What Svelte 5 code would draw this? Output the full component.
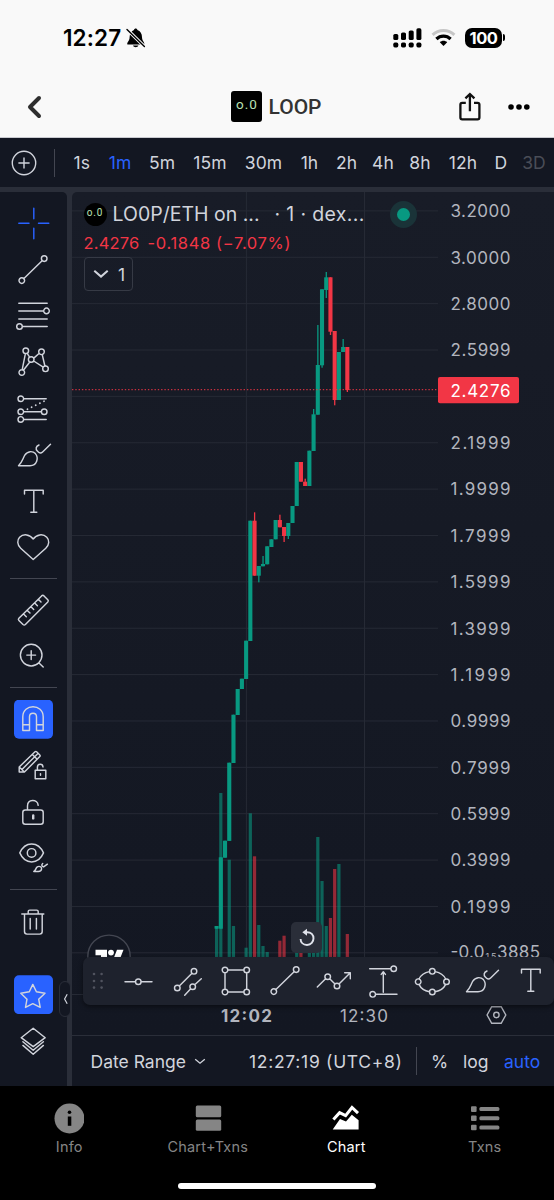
<script>
  const ring = (x, y, r = 2.8) => `M${x - r} ${y}a${r} ${r} 0 1 0 ${2 * r} 0a${r} ${r} 0 1 0 ${-2 * r} 0`;

  const trend = ring(11.8, 33.6) + ring(34.2, 11.6) + 'M13.9 31.5L32.1 13.7';
  const brush =
    'M8.5 33.7C12.5 30 12.8 26.5 14.8 23.2C17.5 18.7 22.8 18.8 25.4 21.6C29 26 27 33.7 20 33.7Z' +
    'M29 13C25.8 14.3 25.4 17 27.3 19.1C29.3 21.4 31 21.5 32.6 20L40.5 12.3';
  const text = 'M14.5 15V11.3H33.2V15M23.8 11.3V33.3M20.8 33.3H26.8';

  const sidebar = [
    { name: 'Cross', active: true, d: 'M8.8 23.3H19M28.5 23.3H38.8M23.8 8.3V18.7M23.8 28.3V38.7' },
    { name: 'Trend line', d: trend },
    {
      name: 'Fib retracement',
      d: 'M8.8 10.2H37.2M8.8 17.9H33.7M8.8 25.9H37.2M12.3 33.5H37.2' + ring(36.5, 17.9) + ring(9.5, 33.5),
    },
    {
      name: 'Pattern',
      d:
        ring(15.8, 11.8) + ring(31.5, 12.8) + ring(21.2, 20.5) + ring(11.8, 33.5) + ring(35.5, 29.8) +
        'M15.4 14.6L12.2 30.7M17.2 14.3L19.6 18.1M19.8 23L13.4 31.2M23.8 19.1L29 14.5M23.7 22L33.2 28.2M32.2 15.5L34.9 27',
    },
    {
      name: 'Forecast',
      d:
        ring(10.8, 12.7) + ring(10.8, 25.7) + ring(34.2, 25.7) + ring(10.8, 33.4) +
        'M13.6 12.7H36.2M13.6 25.7H31.4M13.6 33.4H36.2',
      dots: 'M17.4 23.2L34 15.2',
    },
    { name: 'Brush', d: brush },
    { name: 'Text', d: text },
    {
      name: 'Emoji',
      d: 'M23.2 34.5L10.7 23.2C7 19.8 7 15 9.6 12.2C13.5 8.4 20 9.3 23.2 14C26.4 9.3 33 8.4 36.8 12.2C39.5 15 39.5 19.8 35.8 23.2Z',
    },
    { divider: true },
    {
      name: 'Measure',
      d: 'M31.6 8.9Q32.8 7.8 34 8.9L37.8 12.7Q38.8 13.8 37.8 14.9L15.4 37.5Q14.2 38.6 13 37.5L8.9 33.5Q7.8 32.4 8.9 31.3ZM28.3 12.3L31 15M24.7 16L27.4 18.7M21 19.7L23.7 22.4M17.3 23.4L20 26.1M13.6 27.1L16.3 29.8',
    },
    { name: 'Zoom', d: ring(21.2, 21.1, 10.8) + 'M16.8 21.1H25.6M21.2 16.7V25.5M29 29L33.2 33.1' },
    { divider: true },
    {
      name: 'Magnet',
      boxed: true,
      d: 'M12.8 34.4V20.8C12.8 7.4 33.2 7.4 33.2 20.8V34.4H26.5V20.8C26.5 16 19.5 16 19.5 20.8V34.4ZM12.8 28.7H19.5M26.5 28.7H33.2',
    },
    {
      name: 'Stay in drawing mode',
      d: 'M9.2 29V24L25 8.8Q25.8 8 26.6 8.8L29.8 12Q30.6 12.8 29.8 13.6L14.4 29ZM9.2 24L14.4 29M12 26.4L27.2 11.2M22.3 11.5L27.2 16.2M25.2 27.3H35.8V35.8H25.2ZM27.4 27.3V24.3C27.4 20.3 32.8 20.3 33 24M30.5 30.7V32.2',
    },
    {
      name: 'Lock',
      d: 'M15.3 20.9H30.7Q33.2 20.9 33.2 23.4V32.8Q33.2 35.3 30.7 35.3H15.3Q12.8 35.3 12.8 32.8V23.4Q12.8 20.9 15.3 20.9ZM17.5 20.9V17C17.5 9.8 27.5 9.8 28.2 16.3',
      bold: 'M23.2 26.4V29.4',
    },
    {
      name: 'Hide',
      d:
        'M9.8 17.9C15 5.9 28.3 5.9 33.5 17.9C28.3 29.9 15 29.9 9.8 17.9Z' + ring(21.6, 17.9, 4.3) +
        'M23.8 36.5C26 35.5 25.4 33.2 27.3 31.9C29.2 30.7 31.7 31.8 31.6 33.8C31.5 35.7 30 36.5 28.3 36.5ZM32.7 28.5C31.3 29.7 31.6 31.5 33.6 31.9L37.4 29.2',
    },
    { divider: true },
    {
      name: 'Remove',
      d: 'M11.8 16H33.8M18.2 16V13.6Q18.2 12.1 19.7 12.1H26.7Q28.2 12.1 28.2 13.6V16M14.5 16V33.6Q14.5 36.1 17 36.1H29.7Q32.2 36.1 32.2 33.6V16M20.2 20.5V31M26.4 20.5V31',
    },
    { spacer: true },
    {
      name: 'Favorites',
      boxed: true,
      d: 'M22.8 12.4L26.4 19.7L35 21.2L28.7 27.2L30.2 35.4L22.8 31.7L15.5 35.4L17 27.2L10.8 21.2L19.3 19.7Z',
    },
    {
      name: 'Object tree',
      d: 'M23.2 10.3L35.2 19.7L23.2 28.7L11.2 19.7ZM12.9 23.7L23.2 32.3L33.4 23.7M12.9 27.4L23.2 36.3L33.4 27.4',
    },
  ];

  const favorites = [
    { name: 'Horizontal line', d: ring(23.3, 23.7) + 'M10 23.7H20.5M26.1 23.7H37' },
    {
      name: 'Parallel channel',
      d: ring(30, 13.3) + ring(13.3, 30) + ring(28.7, 28.7) + 'M15.3 28L28 15.3M20.7 37.3L26.7 30.7M30.7 26.7L37.3 20.7',
    },
    {
      name: 'Rectangle',
      d: ring(12, 12) + ring(33.7, 12) + ring(12, 34) + ring(33.7, 34) + 'M14.8 12H30.9M14.8 34H30.9M12 14.8V31.2M33.7 14.8V31.2',
    },
    { name: 'Trend line', d: trend },
    {
      name: 'Path',
      d: ring(16.7, 18.7) + ring(26, 28) + 'M6.3 29L14.6 20.7M18.7 20.7L24 26M28 26L39.3 14.7M33.7 14.7H39.3V20.7',
    },
    {
      name: 'Price range',
      d: ring(33.7, 10.7) + ring(12.7, 36.3) + 'M9.7 10.7H30.9M15.5 36.3H37M23.3 34.3V14M21.2 16.4L23.3 13.7L25.4 16.4',
    },
    {
      name: 'Ellipse',
      d:
        ring(23.3, 13.3) + ring(23.3, 34) + ring(9.2, 23.7) + ring(37.5, 23.7) +
        'M10 21C12 16.7 15.5 14.5 20.4 13.6M26.2 13.6C31.1 14.5 34.6 16.7 36.7 21M10 26.4C12 30.7 15.5 32.9 20.4 33.8M26.2 33.8C31.1 32.9 34.6 30.7 36.7 26.4',
    },
    { name: 'Brush', d: brush },
    { name: 'Text', d: text },
  ];

  const intervals = ['1s', '1m', '5m', '15m', '30m', '1h', '2h', '4h', '8h', '12h', 'D', '3D'];

  const prices = [
    '3.2000', '3.0000', '2.8000', '2.5999', '', '2.1999', '1.9999', '1.7999',
    '1.5999', '1.3999', '1.1999', '0.9999', '0.7999', '0.5999', '0.3999', '0.1999',
  ];
  const priceY = (i) => 210.9 + i * 46.37;

  // body top, body bottom, up, wick top, wick bottom, volume top
  const candles = [
    [926, 928.7, 1, 0, 0, 927],
    [857.3, 928.7, 1, 0, 0, 793],
    [840.7, 857.7, 1],
    [762.7, 840.9, 1, 0, 0, 859.7],
    [714.7, 763, 1, 0, 0, 926],
    [689, 715, 1],
    [678.7, 689, 1],
    [640.7, 679, 1, 0, 0, 947.7],
    [520.7, 641, 1, 0, 0, 813.3],
    [520.7, 575.7, 0, 512.3, 0, 856.3],
    [566, 575.7, 1, 0, 582.3, 925],
    [564, 566.3, 1, 556, 0, 946],
    [546.3, 564.3, 1, 0, 0, 952],
    [539.3, 547, 1],
    [520, 539.3, 1],
    [520, 527.3, 0, 514.7, 0, 940.7],
    [527, 536, 0, 0, 542, 935.7],
    [523, 536, 1, 0, 539, 0],
    [506, 523, 1],
    [462, 506, 1, 0, 0, 951],
    [462, 481.7, 0, 0, 0, 952],
    [481.7, 486, 0, 478.7, 0, 0],
    [450.7, 486, 1, 0, 0, 952],
    [414.3, 451, 1, 409, 0, 951],
    [365, 414.7, 1, 325, 0, 837],
    [289.3, 365.3, 1, 0, 367.7, 881],
    [277.3, 290, 1, 272, 298, 926],
    [277.3, 331.7, 0, 0, 335, 918],
    [331, 400, 0, 0, 405.3, 869],
    [352, 400, 1, 0, 0, 864],
    [347, 352, 1, 339, 0, 0],
    [347, 390, 0, 0, 392, 934],
  ].map(([top, bottom, up, high, low, volume], i) => ({
    x: 216.6 + i * 4.217,
    top,
    bottom,
    color: up ? '#089981' : '#f23645',
    high: high || top,
    low: low || bottom,
    volume,
  }));
</script>

{#snippet icon(item)}
  <svg class="icon" width="46" height="46" viewBox="0 0 46 46" role="img" aria-label={item.name}>
    <path d={item.d} />
    {#if item.dots}<path d={item.dots} stroke-width="1.8" stroke-dasharray="0.1 4.5" />{/if}
    {#if item.bold}<path d={item.bold} stroke-width="2.4" />{/if}
  </svg>
{/snippet}

<main>
  <header>
    <div class="status">
      <span class="clock">12:27</span>
      <svg class="bell" width="20" height="20" viewBox="0 0 20 20">
        <path d="M1.4 16.6C.6 14.2 3.6 13.5 3.6 9.3C3.6 5.3 5.6 2.8 8 2C8.3 0 11.1 0 11.4 2C14.4 3 16 5.6 16 9.3C16 13.3 19 14.4 18.2 16.6Z" />
        <path d="M7 17.6H12.4C11.8 19.8 7.6 19.8 7 17.6Z" />
        <path d="M1 1.4L18.6 18.6" stroke="#f9f9f9" stroke-width="3.4" />
        <path d="M1 1.4L18.4 18.4" stroke="#000" stroke-width="1.4" stroke-linecap="round" />
      </svg>
      <svg class="signal" width="30" height="20" viewBox="0 0 30 20">
        <rect x="0.3" y="6" width="5" height="6" rx="1.6" />
        <rect x="8" y="4.4" width="5" height="7.6" rx="1.6" />
        <rect x="15.7" y="2.4" width="5" height="9.6" rx="1.6" />
        <rect x="23.4" y="0.3" width="5" height="11.7" rx="1.6" />
        {#each [0.3, 8, 15.7, 23.4] as x}
          <rect {x} y="14.6" width="5" height="4.8" rx="1.6" />
        {/each}
      </svg>
      <svg class="wifi" width="25" height="20" viewBox="0 0 25 20">
        <path d="M1.6 6.8C7.6 1 17.4 1 23.4 6.8" fill="none" stroke="#c6c6c6" stroke-width="3" />
        <path d="M5.4 11C9.4 7.1 15.6 7.1 19.6 11" fill="none" stroke="#000" stroke-width="3.2" />
        <path d="M8.8 14.3C10.9 12.3 14.1 12.3 16.2 14.3L12.5 18Z" />
      </svg>
      <span class="battery">100</span>
      <span class="cap"></span>
    </div>
    <div class="titlebar">
      <svg class="back" width="15" height="24" viewBox="0 0 15 24">
        <path d="M12 3L3 12L12 21" fill="none" stroke="#2e2e2e" stroke-width="4" stroke-linecap="round" stroke-linejoin="round" />
      </svg>
      <span class="logo">o.0</span>
      <h1>LOOP</h1>
      <svg class="share" width="22" height="30" viewBox="0 0 22 30">
        <path d="M6.8 10.8H3.2Q1.4 10.8 1.4 12.6V25.6Q1.4 27.4 3.2 27.4H18.6Q20.4 27.4 20.4 25.6V12.6Q20.4 10.8 18.6 10.8H15M10.9 19.2V2.4M6.4 6.4L10.9 2L15.4 6.4" fill="none" stroke="#111" stroke-width="2.3" />
      </svg>
      <svg width="22" height="6" viewBox="0 0 22 6">
        <circle cx="3" cy="3" r="2.8" /><circle cx="11" cy="3" r="2.8" /><circle cx="18.8" cy="3" r="2.8" />
      </svg>
    </div>
  </header>

  <div class="intervals">
    <div class="add">
      <svg width="26" height="26" viewBox="0 0 26 26">
        <path d="{ring(13, 13, 11.7)}M7.4 13H18.6M13 7.4V18.6" fill="none" stroke="#d1d4dc" stroke-width="1.4" />
      </svg>
    </div>
    {#each intervals as label}
      <span class:selected={label === '1m'} class:faded={label === '3D'}>{label}</span>
    {/each}
  </div>

  <div class="workspace">
    <nav class="tools">
      {#each sidebar as item}
        {#if item.divider}
          <hr />
        {:else if item.spacer}
          <div class="spacer"></div>
        {:else}
          <div class="tool" class:active={item.active} class:boxed={item.boxed}>{@render icon(item)}</div>
        {/if}
      {/each}
      <div class="handle">
        <svg width="5" height="12" viewBox="0 0 5 12"><path d="M4.2 1.2L1.6 6L4.2 10.8" fill="none" stroke="#d1d4dc" stroke-width="1.2" /></svg>
      </div>
    </nav>

    <section class="panel">
      <div class="chart">
        <svg width="482" height="843" viewBox="72 192 482 843">
          <g stroke="#262a35">
            {#each Array(17) as _, i}
              <line x1="72" x2="438" y1={priceY(i)} y2={priceY(i)} />
            {/each}
            <line x1="246.4" x2="246.4" y1="192" y2="994" />
            <line x1="364.5" x2="364.5" y1="192" y2="994" />
            <line x1="72" x2="554" y1="994.5" y2="994.5" />
          </g>

          <g class="mark">
            <circle cx="109" cy="956.3" r="21.2" fill="#131722" stroke="#434651" stroke-width="1.4" />
            <path d="M95.5 949.7H107V960H101V955.3H95.5ZM117 949.7H123.5L119.5 960H113Z" fill="#fff" />
            <circle cx="111" cy="952.6" r="2.9" fill="#fff" />
          </g>

          {#each candles as c}
            {#if c.volume}
              <rect x={c.x - 1.6} y={c.volume} width="3.2" height={958 - c.volume} fill={c.color} opacity="0.58" />
            {/if}
          {/each}
          {#each candles as c}
            <rect x={c.x - 0.6} y={c.high} width="1.3" height={c.low - c.high} fill={c.color} />
            <rect x={c.x - 2.05} y={c.top} width="4.1" height={c.bottom - c.top} fill={c.color} />
          {/each}

          <line x1="72" x2="438" y1="389.7" y2="389.7" stroke="#f23645" stroke-dasharray="1.4 1.9" />

          <g class="axis">
            {#each prices as price, i}
              {#if price}<text x="450.5" y={priceY(i) + 6.3} textLength="60">{price}</text>{/if}
            {/each}
            <text x="450.5" y="958.4" textLength="34">-0.0</text>
            <text x="485.5" y="960" font-size="9" textLength="11">15</text>
            <text x="497" y="958.4" textLength="43">3885</text>
            <text x="221" y="1021.8" textLength="51" font-weight="700">12:02</text>
            <text x="340" y="1021.8" textLength="48">12:30</text>
          </g>
          <rect x="438" y="377" width="81" height="26.3" rx="2" fill="#f23645" />
          <text class="last" x="450.5" y="396.6" textLength="60">2.4276</text>
          <path d="M491.7 1006.7H501.2L505.8 1015L501.2 1023.3H491.7L487.1 1015Z{ring(496.4, 1015, 2.7)}" fill="none" stroke="#b2b5be" stroke-width="1.4" />
        </svg>

        <div class="legend">
          <div class="pair">
            <span class="coin">o.0</span>
            <span class="symbol">LO0P/ETH on ...</span>
            <span class="source">· 1 · dex...</span>
            <span class="live"></span>
          </div>
          <div class="change"><span>2.4276</span><span class="delta">-0.1848 (−7.07%)</span></div>
          <div class="count">
            <svg width="16" height="10" viewBox="0 0 16 10"><path d="M1.3 1.7L8 7.6L14.7 1.7" fill="none" stroke="#d1d4dc" stroke-width="2" /></svg>
            1
          </div>
        </div>

        <div class="reset">
          <svg width="18" height="20" viewBox="0 0 18 20">
            <path d="M8.4 4.2C18.2 3.6 17.3 17 9 17C5 17 2.6 14.2 2.6 11" fill="none" stroke="#e0e3eb" stroke-width="1.9" />
            <path d="M9 0.8V7.8L4.3 4.3Z" fill="#e0e3eb" />
          </svg>
        </div>

        <div class="favorites">
          <svg class="grip" width="12" height="18" viewBox="0 0 12 18">
            {#each [2, 9, 15.6] as y}
              <circle cx="2" cy={y} r="1.3" /><circle cx="9.6" cy={y} r="1.3" />
            {/each}
          </svg>
          {#each favorites as item}
            <div class="favorite">{@render icon(item)}</div>
          {/each}
        </div>
      </div>

      <div class="range">
        <span class="date">Date Range</span>
        <svg width="12" height="7" viewBox="0 0 12 7"><path d="M1.2 1.2L6 5.2L10.8 1.2" fill="none" stroke="#d1d4dc" stroke-width="1.3" /></svg>
        <span class="time">12:27:19 (UTC+8)</span>
        <i></i>
        <span class="percent">%</span>
        <span class="log">log</span>
        <span class="auto">auto</span>
      </div>
    </section>
  </div>

  <footer>
    <div class="tabs">
      <div class="tab">
        <svg width="30" height="31" viewBox="0 0 30 31">
          <circle cx="15.5" cy="15.5" r="15" />
          <circle cx="15.5" cy="9.2" r="1.8" fill="#000" />
          <rect x="13.8" y="13.5" width="3.5" height="9.3" fill="#000" />
        </svg>
        <span>Info</span>
      </div>
      <div class="tab">
        <svg width="30" height="31" viewBox="0 0 30 31">
          <rect x="2.8" y="2.5" width="25.4" height="11.7" rx="1.5" />
          <rect x="2.8" y="16.5" width="25.4" height="11.2" rx="1.5" />
        </svg>
        <span>Chart+Txns</span>
      </div>
      <div class="tab current">
        <svg width="30" height="31" viewBox="0 0 30 31">
          <path d="M1.7 26.5L9 15.9L15 18.5L20.8 11.7L27.6 17.3V26.5Z" />
          <path d="M2.4 16.5L8.6 9.7L14.6 12.7L21 4.5L27 10.1" fill="none" stroke="#fff" stroke-width="3" />
        </svg>
        <span>Chart</span>
      </div>
      <div class="tab">
        <svg width="30" height="31" viewBox="0 0 30 31">
          {#each [3.3, 12.5, 21.7] as y}
            <rect x="1" {y} width="5.6" height="5.6" rx="1" />
            <rect x="9.4" y={y + 0.8} width="20" height="4" rx="1.5" />
          {/each}
        </svg>
        <span>Txns</span>
      </div>
    </div>
    <div class="home"></div>
  </footer>
</main>

<style>
  :global(body) {
    background: #000;
  }
  main {
    width: 554px;
    height: 1200px;
    overflow: hidden;
    font-family: Inter, "Liberation Sans", sans-serif;
    color: #d1d4dc;
    white-space: nowrap;
  }
  svg {
    display: block;
    flex: none;
  }
  header {
    height: 137px;
    background: #f9f9f9;
    border-bottom: 1px solid #c9cad0;
    color: #000;
  }
  .status {
    display: flex;
    align-items: center;
    height: 75px;
    padding-left: 63px;
  }
  .clock {
    width: 63px;
    font-size: 22.5px;
    font-weight: 600;
    letter-spacing: 0.1px;
  }
  .signal {
    margin-left: 247px;
  }
  .wifi {
    margin-left: 8px;
  }
  .battery {
    width: 37px;
    height: 20px;
    margin-left: 9px;
    border-radius: 7px;
    background: #000;
    color: #fff;
    font-size: 16.5px;
    font-weight: 700;
    line-height: 20px;
    text-align: center;
    letter-spacing: -0.5px;
  }
  .cap {
    width: 2px;
    height: 7px;
    margin-left: 1px;
    border-radius: 0 3px 3px 0;
    background: #000;
  }
  .titlebar {
    display: flex;
    align-items: center;
    height: 62px;
    padding: 1px 0 0 26.5px;
    box-sizing: border-box;
  }
  .logo {
    width: 31px;
    height: 31px;
    margin-left: 189.5px;
    border-radius: 3px;
    background: #000;
    color: #b9e0b4;
    font: 13.5px/27px Roboto, sans-serif;
    letter-spacing: 1px;
    text-indent: 1px;
    text-align: center;
  }
  h1 {
    width: 52px;
    margin: 0 0 0 6.5px;
    color: #333;
    font: 500 21px Roboto, sans-serif;
  }
  .share {
    margin: 0 27px 0 138px;
  }
  .intervals {
    display: grid;
    grid-template-columns: 64px 35.5px 41px 43px 53px 54px 38px 36px 37px 37px 49px 26.5px 40px;
    align-items: center;
    height: 49px;
    background: #131722;
    font-size: 17.5px;
    text-align: center;
    letter-spacing: 0.1px;
  }
  .add {
    display: flex;
    align-items: center;
    width: 55px;
    height: 28px;
    padding-left: 11px;
    box-sizing: border-box;
    border-right: 1px solid #434651;
  }
  .selected,
  .auto {
    color: #2962ff;
  }
  .faded {
    color: #4a4d57;
  }
  .workspace {
    display: flex;
    gap: 5px;
    height: 894px;
    padding-top: 5px;
    background: #2a2e39;
  }
  .tools {
    position: relative;
    width: 67px;
    padding-top: 8px;
    box-sizing: border-box;
    border-radius: 0 5px 0 0;
    background: #131722;
  }
  .tool {
    display: flex;
    align-items: center;
    height: 46.4px;
    padding-left: 10px;
  }
  .icon {
    fill: none;
    stroke: #d1d4dc;
    stroke-width: 1.45;
    stroke-linecap: round;
    stroke-linejoin: round;
  }
  .active .icon {
    stroke: #2962ff;
  }
  .boxed {
    background: linear-gradient(#2962ff, #2962ff) center / 39px 39px no-repeat;
    clip-path: inset(3.7px 14px 3.7px 14px round 5px);
  }
  hr {
    width: 47px;
    height: 1px;
    margin: 7.3px 0 7.8px 10px;
    border: 0;
    background: #434651;
  }
  .spacer {
    height: 27.4px;
  }
  .handle {
    position: absolute;
    left: 59px;
    top: 789px;
    display: flex;
    align-items: center;
    justify-content: center;
    width: 10px;
    height: 34px;
    border: 1px solid #2a2e39;
    border-radius: 6px;
    background: #131722;
  }
  .panel {
    width: 482px;
  }
  .chart {
    position: relative;
    height: 843px;
    border-radius: 5px 0 0 0;
    background: linear-gradient(#181c27, #131722);
  }
  .axis text {
    fill: #b2b5be;
  }
  .axis,
  .last {
    font-size: 17px;
  }
  .last {
    fill: #fff;
  }
  .legend {
    position: absolute;
    left: 11.5px;
    top: 8px;
  }
  .pair {
    display: flex;
    align-items: center;
    height: 28px;
    font-size: 19.5px;
  }
  .coin {
    width: 23px;
    height: 23px;
    margin-right: 6px;
    border-radius: 50%;
    background: #000;
    color: #b9e0b4;
    font: 10px/20px Roboto, sans-serif;
    letter-spacing: 0.8px;
    text-align: center;
  }
  .symbol {
    width: 162px;
  }
  .source {
    width: 115px;
    letter-spacing: 0.35px;
  }
  .live {
    width: 13px;
    height: 13px;
    border: 7.5px solid #1a3338;
    border-radius: 50%;
    background: #089981;
  }
  .change {
    display: flex;
    gap: 8px;
    height: 30px;
    color: #f23645;
    font-size: 16.5px;
    line-height: 30px;
    letter-spacing: 0.2px;
  }
  .delta {
    letter-spacing: 0.65px;
  }
  .count {
    display: flex;
    align-items: center;
    gap: 9px;
    width: 49px;
    height: 34px;
    padding-left: 8px;
    margin: -1px 0 0 0.5px;
    box-sizing: border-box;
    border: 1px solid #363a45;
    border-radius: 4px;
    font-size: 17.5px;
  }
  .reset {
    position: absolute;
    left: 219px;
    top: 730px;
    display: flex;
    align-items: center;
    justify-content: center;
    width: 31px;
    height: 31px;
    border-radius: 5px;
    background: #2a2e39;
  }
  .favorites {
    position: absolute;
    left: 11px;
    top: 765px;
    display: flex;
    align-items: center;
    width: 471px;
    height: 48px;
    border-radius: 7px;
    background: #1e222d;
    box-shadow: 0 2px 5px rgba(0, 0, 0, 0.45);
  }
  .grip {
    margin: 0 9px 0 9px;
    fill: #50535e;
  }
  .favorite {
    display: flex;
    justify-content: center;
    width: 49px;
    flex: none;
  }
  .range {
    display: flex;
    align-items: center;
    height: 51px;
    padding-left: 18.5px;
    box-sizing: border-box;
    border-top: 1.5px solid #2a2e39;
    background: #131722;
    font-size: 17.5px;
  }
  .date {
    width: 103px;
  }
  .time {
    width: 167px;
    margin-left: 43.5px;
    letter-spacing: 0.7px;
  }
  .range i {
    width: 1px;
    height: 28px;
    background: #434651;
  }
  .percent {
    width: 32px;
    margin-left: 14px;
  }
  .log {
    width: 41px;
  }
  footer {
    height: 114px;
    background: #000;
  }
  .tabs {
    display: grid;
    grid-template-columns: repeat(4, 1fr);
    height: 97px;
    padding-top: 17px;
    box-sizing: border-box;
  }
  .tab {
    display: flex;
    flex-direction: column;
    align-items: center;
    color: #858585;
    fill: #858585;
    font-size: 14.5px;
    line-height: 25px;
    letter-spacing: 0.2px;
  }
  .current {
    color: #fff;
    fill: #fff;
  }
  .home {
    width: 198px;
    height: 6px;
    margin: 0 auto;
    border-radius: 3px;
    background: #fff;
  }
</style>
